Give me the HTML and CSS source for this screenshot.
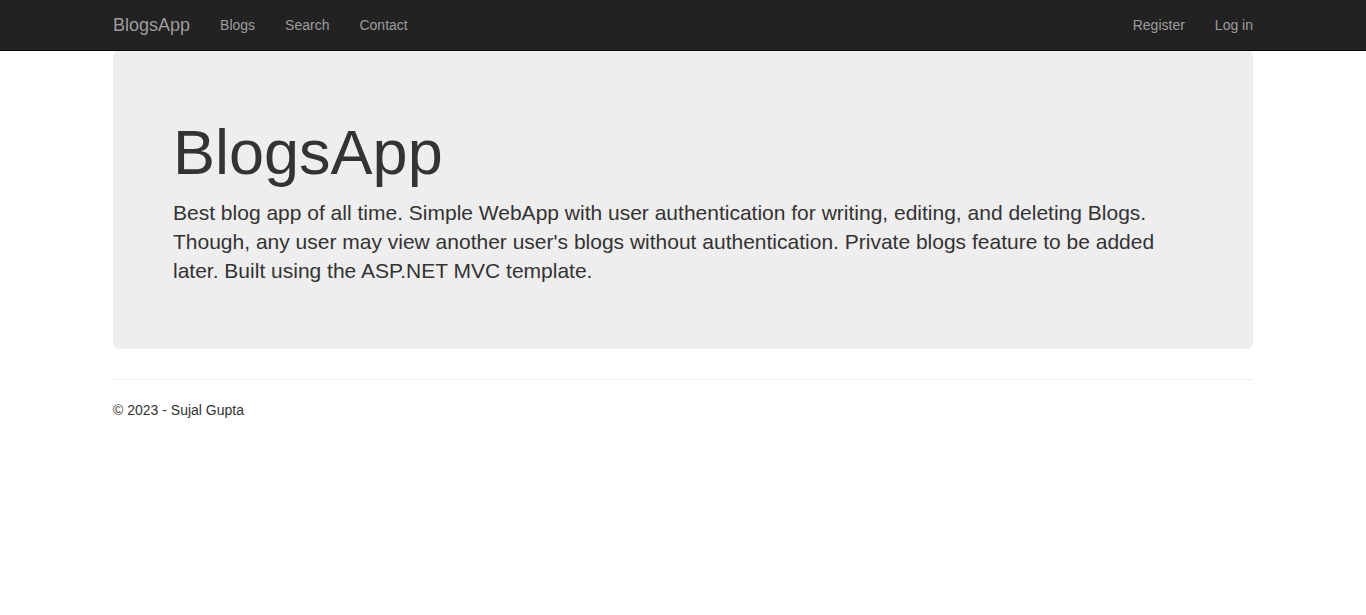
FILE: index.html
```html
<!DOCTYPE html>
<html>
<head>
<meta charset="utf-8">
<title>BlogsApp</title>
<link rel="stylesheet" href="styles.css">
</head>
<body>
<nav class="navbar">
  <div class="container nav-inner">
    <div class="nav-left">
      <a class="brand" href="#">BlogsApp</a>
      <ul class="nav">
        <li><a href="#">Blogs</a></li>
        <li><a href="#">Search</a></li>
        <li><a href="#">Contact</a></li>
      </ul>
    </div>
    <ul class="nav nav-right">
      <li><a href="#">Register</a></li>
      <li><a href="#">Log in</a></li>
    </ul>
  </div>
</nav>
<div class="container body-content">
  <div class="jumbotron">
    <h1>BlogsApp</h1>
    <p class="lead">Best blog app of all time. Simple WebApp with user authentication for writing, editing, and deleting Blogs. Though, any user may view another user's blogs without authentication. Private blogs feature to be added later. Built using the ASP.NET MVC template.</p>
  </div>
  <hr>
  <footer>
    <p>&copy; 2023 - Sujal Gupta</p>
  </footer>
</div>
</body>
</html>
```
FILE: styles.css
```css
* { box-sizing: border-box; }
html, body { margin: 0; }
body {
  font-family: "Liberation Sans", Arial, Helvetica, sans-serif;
  font-size: 14px;
  line-height: 20px;
  color: #333;
  background: #fff;
  padding-top: 50px;
  padding-bottom: 20px;
}
a { text-decoration: none; }
.container {
  width: 1170px;
  margin: 0 auto;
  padding: 0 15px;
}
.navbar {
  position: fixed;
  top: 0; left: 0; right: 0;
  height: 51px;
  background: #222;
  border-bottom: 1px solid #080808;
  z-index: 10;
}
.nav-inner {
  display: flex;
  justify-content: space-between;
  height: 50px;
}
.nav-left { display: flex; margin-left: -15px; }
.brand {
  display: block;
  height: 50px;
  padding: 15px;
  font-size: 18px;
  line-height: 20px;
  color: #9d9d9d;
}
.nav {
  display: flex;
  list-style: none;
  margin: 0;
  padding: 0;
}
.nav a {
  display: block;
  padding: 15px;
  line-height: 20px;
  color: #9d9d9d;
}
.nav-right { margin-right: -15px; }
.jumbotron {
  background: #eee;
  border-radius: 6px;
  padding: 48px 60px;
  margin-bottom: 30px;
}
.jumbotron h1 {
  font-size: 63px;
  font-weight: 500;
  line-height: 1.1;
  margin: 20px 0 11px;
  color: #333;
}
.jumbotron .lead {
  font-size: 21px;
  font-weight: 200;
  line-height: 29px;
  margin: 0 0 16px;
}
hr {
  margin: 20px 0;
  border: 0;
  border-top: 1px solid #eee;
}
footer p { margin: 0 0 10px; }
```
